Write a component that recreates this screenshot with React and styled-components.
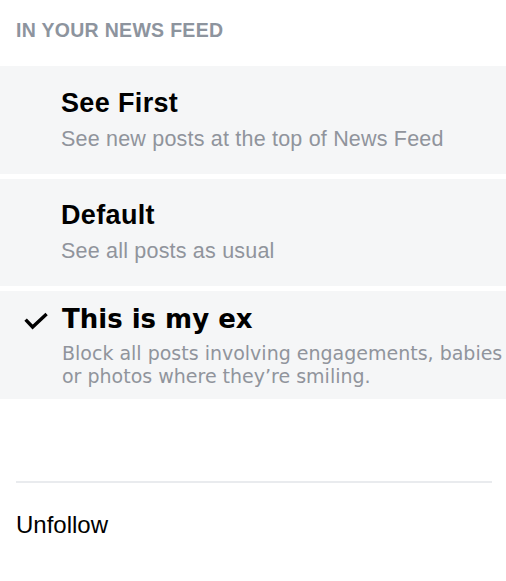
import React from 'react';
import styled, { createGlobalStyle } from 'styled-components';

const GlobalStyle = createGlobalStyle`
  body {
    margin: 0;
    background: #ffffff;
    font-family: 'Liberation Sans', Arial, sans-serif;
  }
`;

const options = [
  {
    title: 'See First',
    subtitle: 'See new posts at the top of News Feed',
  },
  {
    title: 'Default',
    subtitle: 'See all posts as usual',
  },
  {
    title: 'This is my ex',
    subtitle: 'Block all posts involving engagements, babies or photos where they’re smiling.',
    checked: true,
    alt: true,
  },
];

function CheckIcon() {
  return (
    <svg width='24' height='18' viewBox='0 0 24 18'>
      <path d='M1.6 7.6 L8.6 15 L22.6 2' fill='none' stroke='#000' strokeWidth='3.4' />
    </svg>
  );
}

function App() {
  return (
    <Page>
      <GlobalStyle />
      <SectionTitle>IN YOUR NEWS FEED</SectionTitle>
      <OptionList>
        {options.map((opt) => (
          <Option key={opt.title} $alt={opt.alt}>
            <IconSlot $alt={opt.alt}>{opt.checked && <CheckIcon />}</IconSlot>
            <OptionText>
              <OptionTitle $alt={opt.alt}>{opt.title}</OptionTitle>
              <OptionSubtitle $alt={opt.alt}>{opt.subtitle}</OptionSubtitle>
            </OptionText>
          </Option>
        ))}
      </OptionList>
      <Divider />
      <ActionItem>Unfollow</ActionItem>
    </Page>
  );
}

const Page = styled.div`
  width: 506px;
  min-height: 581px;
  padding-top: 19px;
  box-sizing: border-box;
`;

const SectionTitle = styled.h3`
  margin: 0 0 24px 16px;
  font-size: 19.5px;
  line-height: 23px;
  font-weight: bold;
  letter-spacing: 0.3px;
  color: #8d949e;
`;

const OptionList = styled.div`
  display: flex;
  flex-direction: column;
  gap: 5px;
`;

const Option = styled.div`
  display: flex;
  align-items: flex-start;
  height: 107.5px;
  box-sizing: border-box;
  padding-top: ${(p) => (p.$alt ? '12.3px' : '20.6px')};
  background: #f5f6f7;
`;

const IconSlot = styled.div`
  flex: 0 0 ${(p) => (p.$alt ? '62px' : '61px')};
  box-sizing: border-box;
  padding: 9px 0 0 23.5px;
  line-height: 0;
`;

const OptionText = styled.div`
  display: flex;
  flex-direction: column;
  min-width: 0;
`;

const OptionTitle = styled.div`
  font-family: ${(p) => (p.$alt ? "'DejaVu Sans', Verdana, sans-serif" : "'Liberation Sans', Arial, sans-serif")};
  font-size: ${(p) => (p.$alt ? '26px' : '27px')};
  line-height: 32px;
  font-weight: bold;
  letter-spacing: ${(p) => (p.$alt ? '0' : '0.35px')};
  color: #000;
`;

const OptionSubtitle = styled.div`
  margin-top: ${(p) => (p.$alt ? '6.4px' : '7px')};
  font-family: ${(p) => (p.$alt ? "'DejaVu Sans', Verdana, sans-serif" : "'Liberation Sans', Arial, sans-serif")};
  font-size: ${(p) => (p.$alt ? '19px' : '21.5px')};
  line-height: ${(p) => (p.$alt ? '23.5px' : '26px')};
  letter-spacing: ${(p) => (p.$alt ? '0' : '0.2px')};
  color: #90949c;
`;

const Divider = styled.hr`
  margin: 82.5px 14px 0 16px;
  border: none;
  height: 1.5px;
  background: #e9ebee;
`;

const ActionItem = styled.div`
  margin: 28.5px 0 0 16px;
  font-size: 24px;
  line-height: 28px;
  color: #000;
`;

export default App;
